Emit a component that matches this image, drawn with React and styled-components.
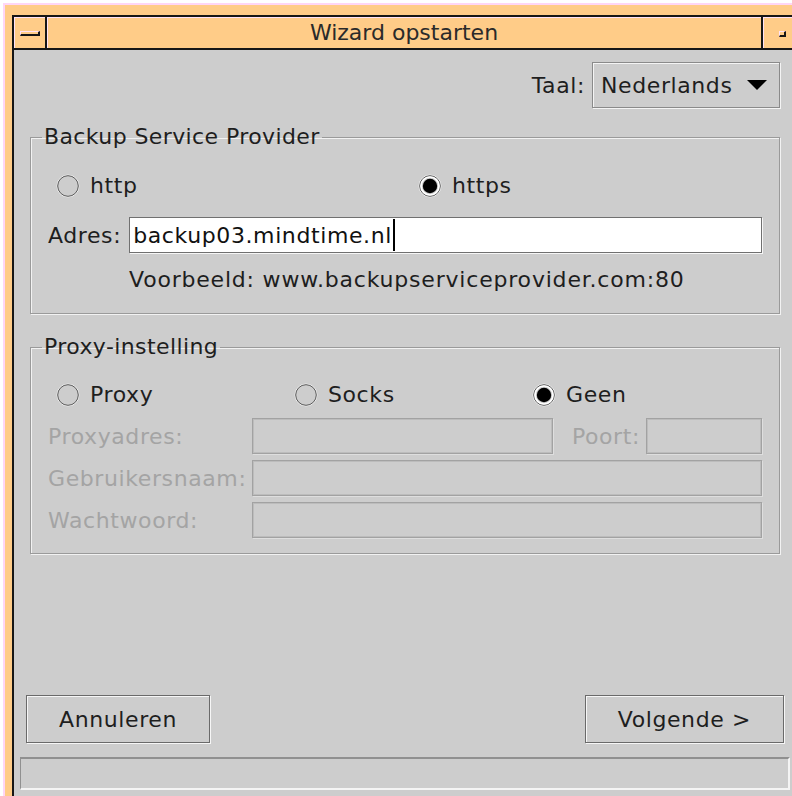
import React from 'react';
import styled, { createGlobalStyle } from 'styled-components';

const Global = createGlobalStyle`
    html, body {
        margin:0;
        padding:0;
        background:#ffffff;
        overflow:hidden;
    }
    body {
        font-family:"DejaVu Sans", "Liberation Sans", sans-serif;
        font-size:22px;
        letter-spacing:0.6px;
        color:#1e1e1e;
    }
`

const RadioMark = ({ checked }) => (
    <svg width="24" height="24" viewBox="0 0 24 24">
        <circle cx="12" cy="12" r="11" fill="none" stroke="#f2f2f2" strokeWidth="1" />
        <circle cx="12" cy="12" r="10.3" fill="none" stroke="#5c5c5c" strokeWidth="1" />
        {checked && (
            <>
                <circle cx="12" cy="12" r="9" fill="none" stroke="#ffffff" strokeWidth="1.6" />
                <circle cx="12" cy="12" r="7.2" fill="#000000" />
            </>
        )}
    </svg>
);

const Radio = ({ checked, children }) => (
    <RadioItem>
        <RadioMark checked={checked} />
        <span>{children}</span>
    </RadioItem>
);

const App = () => {
    return(
        <>
            <Global />
            <Frame>
                <Window>
                    <TitleBar>
                        <TitleButton>
                            <MinimizeGlyph />
                        </TitleButton>
                        <Title>Wizard opstarten</Title>
                        <TitleButton $right>
                            <MaximizeGlyph />
                        </TitleButton>
                    </TitleBar>
                    <Content>
                        <LanguageRow>
                            <span>Taal:</span>
                            <Select>
                                Nederlands
                                <svg width="20" height="10" viewBox="0 0 20 10">
                                    <polygon points="0,0 20,0 10,10" fill="#000" />
                                </svg>
                            </Select>
                        </LanguageRow>

                        <Group $gap={16}>
                            <Legend>Backup Service Provider</Legend>
                            <GroupBody $top={23} $bottom={20}>
                                <RadioRow $count={2} $col={362}>
                                    <Radio>http</Radio>
                                    <Radio checked>https</Radio>
                                </RadioRow>
                                <AddressRow>
                                    <span>Adres:</span>
                                    <AddressField>
                                        backup03.mindtime.nl<Caret />
                                    </AddressField>
                                </AddressRow>
                                <Hint>Voorbeeld: www.backupserviceprovider.com:80</Hint>
                            </GroupBody>
                        </Group>

                        <Group $gap={20}>
                            <Legend>Proxy-instelling</Legend>
                            <GroupBody $top={22} $bottom={15}>
                                <RadioRow $count={3} $col={238}>
                                    <Radio>Proxy</Radio>
                                    <Radio>Socks</Radio>
                                    <Radio checked>Geen</Radio>
                                </RadioRow>
                                <ProxyGrid>
                                    <DimLabel>Proxyadres:</DimLabel>
                                    <DimField />
                                    <DimLabel $right>Poort:</DimLabel>
                                    <DimField />
                                    <DimLabel>Gebruikersnaam:</DimLabel>
                                    <DimField $span />
                                    <DimLabel>Wachtwoord:</DimLabel>
                                    <DimField $span />
                                </ProxyGrid>
                            </GroupBody>
                        </Group>

                        <ButtonRow>
                            <Button>Annuleren</Button>
                            <Button>Volgende &gt;</Button>
                        </ButtonRow>
                        <StatusBar />
                    </Content>
                </Window>
            </Frame>
        </>
    );
};

const Frame = styled.div`
    margin:3px 0 0 3px;
    width:802px;
    border-top:2px solid #ffd6f6;
    border-left:2px solid #ffd6f6;
    background:#ffcc88;
    padding:10px 7px 0 7px;
`
const Window = styled.div`
    width:782px;
    border-left:2px solid #161616;
    border-right:2px solid #161616;
    display:flex;
    flex-direction:column;
`
const TitleBar = styled.div`
    display:flex;
    height:31px;
    border-top:2px solid #161616;
    border-bottom:2px solid #161616;
    background:#ffcc88;
`
const TitleButton = styled.div`
    width:${p => p.$right ? 35 : 33}px;
    display:flex;
    align-items:center;
    justify-content:${p => p.$right ? 'flex-end' : 'center'};
    padding-right:${p => p.$right ? 10 : 0}px;
    box-sizing:border-box;
    box-shadow:inset 1px 1px 0 #ffe2f6;
    border-right:${p => p.$right ? 'none' : '2px solid #161616'};
    border-left:${p => p.$right ? '2px solid #161616' : 'none'};
`
const MinimizeGlyph = styled.span`
    width:17px;
    height:2px;
    border-top:1px solid #ffe2f6;
    border-left:1px solid #ffe2f6;
    border-bottom:2px solid #161616;
    border-right:2px solid #161616;
    margin-top:2px;
`
const MaximizeGlyph = styled.span`
    width:4px;
    height:3px;
    border-top:1px solid #ffe2f6;
    border-left:1px solid #ffe2f6;
    border-bottom:2px solid #161616;
    border-right:2px solid #161616;
    margin-top:2px;
`
const Title = styled.div`
    flex:1;
    display:flex;
    align-items:center;
    justify-content:center;
    box-shadow:inset 1px 1px 0 #ffe2f6;
    font-size:22px;
    letter-spacing:0;
    color:#2a2a2a;
`
const Content = styled.div`
    height:746px;
    box-sizing:border-box;
    background:#cdcdcd;
    padding:12px 16px 6px 16px;
    display:flex;
    flex-direction:column;
`
const LanguageRow = styled.div`
    display:flex;
    justify-content:flex-end;
    align-items:center;
    gap:7px;
`
const Select = styled.div`
    height:46px;
    box-sizing:border-box;
    width:188px;
    display:flex;
    align-items:center;
    justify-content:space-between;
    padding:0 12px 0 8px;
    border:1px solid #8a8a8a;
    box-shadow:1px 1px 0 #f4f4f4, inset 1px 1px 0 #f4f4f4;
`
const Group = styled.fieldset`
    margin:${p => p.$gap}px 0 0 0;
    padding:0;
    min-width:0;
    border:1px solid #9a9a9a;
    box-shadow:1px 1px 0 #f2f2f2, inset 1px 1px 0 #f2f2f2;
`
const Legend = styled.legend`
    margin-left:11px;
    padding:0 2px;
    font-size:22px;
    line-height:26px;
    letter-spacing:0.4px;
`
const GroupBody = styled.div`
    padding:${p => p.$top}px 17px ${p => p.$bottom}px 17px;
    display:flex;
    flex-direction:column;
`
const RadioRow = styled.div`
    display:grid;
    grid-template-columns:repeat(${p => p.$count}, ${p => p.$col}px);
    padding-left:8px;
    height:26px;
    align-items:center;
`
const RadioItem = styled.label`
    display:flex;
    align-items:center;
    gap:10px;
    line-height:26px;
`
const AddressRow = styled.div`
    display:flex;
    align-items:center;
    gap:8px;
    margin-top:18px;
`
const AddressField = styled.div`
    flex:1;
    height:36px;
    box-sizing:border-box;
    background:#ffffff;
    border:1px solid #707070;
    box-shadow:1px 1px 0 #f6f6f6;
    display:flex;
    align-items:center;
    padding-left:3px;
    color:#111;
`
const Caret = styled.span`
    width:2px;
    height:32px;
    background:#000;
    margin-left:1px;
`
const Hint = styled.div`
    margin:14px 0 0 81px;
    line-height:26px;
    letter-spacing:0.8px;
`
const ProxyGrid = styled.div`
    display:grid;
    grid-template-columns:204px 301px 1fr 116px;
    grid-auto-rows:36px;
    row-gap:6px;
    margin-top:10px;
    align-items:center;
`
const DimLabel = styled.span`
    color:#a4a4a4;
    white-space:nowrap;
    text-align:${p => p.$right ? 'right' : 'left'};
    padding-right:${p => p.$right ? 6 : 0}px;
`
const DimField = styled.div`
    height:36px;
    box-sizing:border-box;
    grid-column:${p => p.$span ? 'span 3' : 'auto'};
    border:1px solid #a2a2a2;
    box-shadow:inset 0 0 0 1px #bcbcbc, 1px 1px 0 #dedede;
`
const ButtonRow = styled.div`
    margin:auto -4px 0 -4px;
    display:flex;
    justify-content:space-between;
`
const Button = styled.button`
    height:48px;
    padding:0 32px;
    font-family:inherit;
    font-size:22px;
    letter-spacing:0.6px;
    color:#1e1e1e;
    background:#cdcdcd;
    border:1px solid #6a6a6a;
    box-shadow:1px 1px 0 #f6f6f6, inset 1px 1px 0 #f6f6f6;
    border-radius:0;
`
const StatusBar = styled.div`
    margin:14px -10px 0 -10px;
    height:33px;
    box-sizing:border-box;
    border-top:2px solid #909090;
    border-left:1px solid #909090;
    border-bottom:2px solid #f4f4f4;
    border-right:2px solid #f4f4f4;
`

export default App;
